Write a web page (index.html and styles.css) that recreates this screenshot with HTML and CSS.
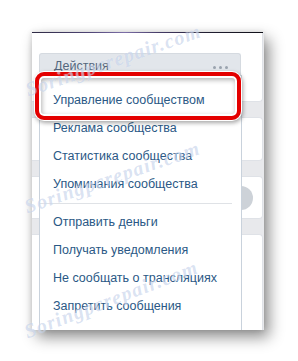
FILE: index.html
```html
<!DOCTYPE html>
<html lang="ru">
<head>
<meta charset="utf-8">
<title>Действия</title>
<link rel="stylesheet" href="styles.css">
</head>
<body>
<div class="stage">
  <div class="shot">
    <div class="cover-line"></div>
    <div class="col">
      <div class="card card-top">
        <div class="actions-btn">
          <span class="btn-label">Действия</span>
          <span class="dots"><i></i><i></i><i></i></span>
        </div>
      </div>
      <div class="card card-2"></div>
      <div class="card card-3"><span class="round-icon"></span></div>
      <div class="card card-4"></div>
    </div>
    <div class="menu">
      <div class="menu-item">Управление сообществом</div>
      <div class="menu-item">Реклама сообщества</div>
      <div class="menu-item">Статистика сообщества</div>
      <div class="menu-item">Упоминания сообщества</div>
      <div class="menu-sep"></div>
      <div class="menu-item">Отправить деньги</div>
      <div class="menu-item">Получать уведомления</div>
      <div class="menu-item">Не сообщать о трансляциях</div>
      <div class="menu-item">Запретить сообщения</div>
    </div>
    <div class="highlight"></div>
  </div>
  <span class="wm wm1">Soringpcrepair.com</span>
  <span class="wm wm2">Soringpcrepair.com</span>
  <span class="wm wm3">Soringpcrepair.com</span>
</div>
</body>
</html>
```

FILE: styles.css
```css
html, body {
  margin: 0;
  padding: 0;
  background: #ffffff;
}
.stage {
  position: relative;
  width: 298px;
  height: 361px;
  overflow: hidden;
  padding: 32px 0 0 32px;
  box-sizing: border-box;
  font-family: "Liberation Sans", Arial, sans-serif;
}
.shot {
  position: relative;
  width: 232px;
  height: 298px;
  overflow: hidden;
  background: #e8e9ec;
  box-shadow: 5px 7px 14px rgba(0, 0, 0, 0.45), -1px 0 5px rgba(0, 0, 0, 0.12);
}
.cover-line {
  height: 1px;
  width: 231px;
  background: linear-gradient(90deg, #2e2a44 0%, #4f4575 25%, #7d6fa8 40%, #453b66 55%, #221f33 75%, #101018 100%);
}
.col {
  display: flex;
  flex-direction: column;
  gap: 15px;
  width: 231px;
}
.card {
  background: #ffffff;
  border: 1px solid #dfe2e7;
  border-left: none;
  border-radius: 0 4px 4px 0;
  box-sizing: border-box;
}
.card-top {
  height: 69px;
  border-top: none;
  border-radius: 0 0 4px 0;
  padding: 20px 0 0 7px;
}
.card-2 { height: 44px; }
.card-3 {
  height: 43px;
  display: flex;
  align-items: center;
  justify-content: flex-end;
  padding-right: 9px;
}
.card-4 { height: 120px; }
.actions-btn {
  width: 202px;
  height: 23px;
  box-sizing: border-box;
  background: #e2e6eb;
  border: 1px solid #d5dae0;
  border-bottom: none;
  border-radius: 3px 3px 0 0;
  display: flex;
  align-items: center;
  justify-content: space-between;
  padding: 1px 12px 0 14px;
}
.btn-label {
  font-size: 12.5px;
  color: #55677d;
}
.dots {
  display: flex;
  gap: 3px;
  margin-top: 3px;
}
.dots i {
  width: 3px;
  height: 3px;
  border-radius: 50%;
  background: #9aa3ae;
}
.round-icon {
  width: 24px;
  height: 24px;
  border-radius: 50%;
  background: #cdd2d8;
}
.menu {
  position: absolute;
  left: 7px;
  top: 43px;
  width: 203px;
  height: 300px;
  box-sizing: border-box;
  background: #ffffff;
  border: 1px solid #c9d2dc;
  padding-top: 10px;
}
.menu-item {
  height: 28px;
  line-height: 28px;
  padding-left: 13px;
  font-size: 12.5px;
  color: #2a5885;
  white-space: nowrap;
}
.menu-sep {
  height: 1px;
  background: #dfe2e6;
  margin: 5px 9px 4px 0;
}
.highlight {
  position: absolute;
  left: 3px;
  top: 40px;
  width: 206px;
  height: 48px;
  box-sizing: border-box;
  border: 4px solid #e40000;
  border-radius: 9px;
  box-shadow: 0 0 0 1px #ffffff, 1px 2px 4px 1px rgba(0, 0, 0, 0.35),
    inset 0 0 0 2px #ffffff, inset 1px 2px 5px 2px rgba(0, 0, 0, 0.3);
}
.wm {
  position: absolute;
  font-family: "Liberation Serif", "DejaVu Serif", serif;
  font-style: italic;
  font-weight: bold;
  font-size: 20px;
  line-height: 20px;
  letter-spacing: 1.2px;
  color: rgba(130, 158, 210, 0.3);
  text-shadow: 0 0 1px rgba(255, 255, 255, 0.6);
  transform-origin: 0 50%;
  transform: rotate(-19deg);
  white-space: nowrap;
}
.wm1 { left: 26px; top: 80px; }
.wm2 { left: 25px; top: 197px; }
.wm3 { left: 25px; top: 322px; transform: rotate(-21deg); }
```
